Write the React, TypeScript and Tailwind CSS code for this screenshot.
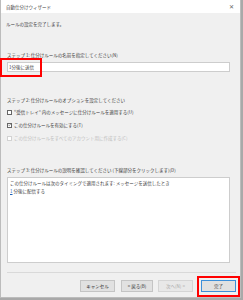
import React from 'react';

const font = { fontFamily: '"Noto Sans CJK JP", "Noto Sans", sans-serif' };

const Check = ({ checked, disabled, label }: { checked?: boolean; disabled?: boolean; label: string }) => (
  <div className="flex items-center gap-[2px] h-[6px]">
    <span
      className={`w-[5px] h-[5px] border flex items-center justify-center bg-white ${
        disabled ? 'border-[#d2d2d2]' : 'border-[#666]'
      }`}
    >
      {checked && (
        <svg width="4" height="4" viewBox="0 0 8 8">
          <path d="M1 4.2 L3.2 6.3 L7 1.6" fill="none" stroke="#333" strokeWidth="1.3" />
        </svg>
      )}
    </span>
    <span className={disabled ? 'text-[#bdbdbd]' : 'text-[#3a3a3a]'}>{label}</span>
  </div>
);

const Btn = ({ label, w, disabled, primary }: { label: string; w: string; disabled?: boolean; primary?: boolean }) => (
  <div
    className={`${w} h-[12px] flex items-center justify-center border ${
      primary ? 'border-[#3c8fd9] bg-[#e1e1e1]' : disabled ? 'border-[#d5d5d5] bg-[#e8e8e8]' : 'border-[#c4c4c4] bg-[#e1e1e1]'
    } ${disabled ? 'text-[#a8a8a8]' : 'text-[#333]'}`}
  >
    {label}
  </div>
);

export default function App() {
  return (
    <div className="w-[243px] h-[300px] bg-[#a9a9a9] relative overflow-hidden text-[4.5px] leading-[6px]" style={font}>
      <div className="w-[241px] h-[298px] bg-[#f0f0f0] border-l border-r border-b border-[#bcbcbc] flex flex-col">
        <div className="h-[13px] bg-white flex items-center justify-between pl-[5px] pr-[6px] text-[#444]">
          <span>自動仕分けウィザード</span>
          <span className="text-[6px] text-[#666]">✕</span>
        </div>
        <div className="flex flex-col pl-[5px] pr-[11px] text-[#3a3a3a]">
          <div className="mt-[8px]">ルールの設定を完了します。</div>
          <div className="mt-[25px] pl-[1px]">ステップ 1: 仕分けルールの名前を指定してください(N)</div>
          <div className="mt-[4px] ml-[1px] w-[223px] h-[10px] bg-white border border-[#cdcdcd] flex items-center pl-[1px]">
            1分後に送信
          </div>
          <div className="mt-[25px] pl-[1px]">ステップ 2: 仕分けルールのオプションを設定してください</div>
          <div className="mt-[6px] ml-[1px] flex flex-col gap-[7px]">
            <Check label="“受信トレイ” 内のメッセージに仕分けルールを適用する(U)" />
            <Check checked label="この仕分けルールを有効にする(T)" />
            <Check disabled label="この仕分けルールをすべてのアカウント用に作成する(C)" />
          </div>
          <div className="mt-[26px] pl-[1px]">ステップ 3: 仕分けルールの説明を確認してください (下線部分をクリックします)(D)</div>
          <div className="mt-[4px] ml-[1px] w-[223px] h-[86px] bg-white border border-[#cdcdcd] px-[2px] pt-[2px] flex flex-col gap-[2px]">
            <div>この仕分けルールは次のタイミングで適用されます: メッセージを送信したとき</div>
            <div>
              <span className="text-[#1a5fb4] underline">1</span> 分後に配信する
            </div>
          </div>
        </div>
        <div className="mt-[9px] ml-[6px] w-[229px] h-px bg-[#d9d9d9]" />
        <div className="mt-[7px] flex pl-[79px]">
          <Btn w="w-[35px]" label="キャンセル" />
          <div className="ml-[6px]">
            <Btn w="w-[32px]" label="< 戻る(B)" />
          </div>
          <div className="ml-[5px]">
            <Btn w="w-[35px]" label="次へ(N) >" disabled />
          </div>
          <div className="ml-[8px]">
            <Btn w="w-[35px]" label="完了" primary />
          </div>
        </div>
      </div>
      <div className="absolute left-0 top-[58px] w-[42px] h-[19px] border-2 border-[#ff0000]" />
      <div className="absolute left-[197px] top-[276px] w-[43px] h-[21px] border-2 border-[#ff0000]" />
    </div>
  );
}
